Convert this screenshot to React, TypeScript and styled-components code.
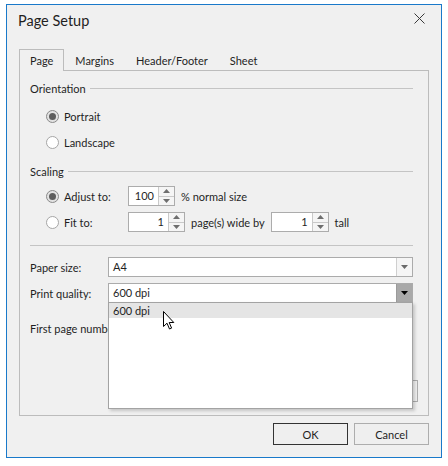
import React from "react";
import styled, { createGlobalStyle } from "styled-components";

const GlobalStyle = createGlobalStyle`
  html, body {
    margin: 0;
    padding: 0;
    background: #ffffff;
  }
  body {
    font-family: Lato, "Liberation Sans", sans-serif;
    font-size: 11px;
    color: #1f1f1f;
  }
`;

const Window = styled.div`
  margin: 4px 0 0 6px;
  width: 436px;
  height: 454px;
  box-sizing: border-box;
  border: 1px solid #1979ca;
  background: #f0f0f0;
  display: flex;
  flex-direction: column;
`;

const TitleBar = styled.div`
  height: 31px;
  display: flex;
  align-items: center;
  justify-content: space-between;
  padding: 0 16px 0 11px;
`;

const Title = styled.div`
  font-size: 14.5px;
  color: #1f1f1f;
`;

const CloseButton = styled.div`
  width: 12px;
  height: 12px;
  display: flex;
  align-items: center;
  justify-content: center;
  margin-top: -4px;
`;

const Body = styled.div`
  flex: 1;
  display: flex;
  flex-direction: column;
  padding: 13px 12px 12px 12px;
`;

const TabStrip = styled.div`
  display: flex;
  height: 21px;
  position: relative;
  z-index: 1;
`;

const Tab = styled.div<{ $active?: boolean }>`
  box-sizing: border-box;
  height: ${(p) => (p.$active ? "22px" : "21px")};
  padding: 0 10px;
  display: flex;
  align-items: center;
  background: #f0f0f0;
  border: 1px solid ${(p) => (p.$active ? "#bcbcbc" : "transparent")};
  border-bottom: none;
`;

const Panel = styled.div`
  flex: 1;
  box-sizing: border-box;
  border: 1px solid #bcbcbc;
  padding: 0 15px 0 10px;
  display: flex;
  flex-direction: column;
`;

const GroupHeader = styled.div<{ $mt: number }>`
  display: flex;
  align-items: center;
  gap: 4px;
  height: 16px;
  margin-top: ${(p) => p.$mt}px;
  &::after {
    content: "";
    flex: 1;
    height: 1px;
    background: #c4c4c4;
  }
`;

const Separator = styled.div<{ $mt: number }>`
  height: 1px;
  background: #c4c4c4;
  margin-top: ${(p) => p.$mt}px;
`;

const OptionRow = styled.div<{ $mt: number }>`
  display: flex;
  align-items: center;
  height: 20px;
  margin-top: ${(p) => p.$mt}px;
  padding-left: 16px;
  gap: 6px;
`;

const RadioLabel = styled.label<{ $w?: number }>`
  display: flex;
  align-items: center;
  gap: 5px;
  ${(p) => (p.$w ? `width: ${p.$w}px;` : "")}
  flex-shrink: 0;
`;

const RadioCircle = styled.span<{ $checked?: boolean }>`
  width: 13px;
  height: 13px;
  box-sizing: border-box;
  border-radius: 50%;
  border: 1px solid ${(p) => (p.$checked ? "#8a8a8a" : "#a6a6a6")};
  background: ${(p) => (p.$checked ? "#e2e2e2" : "#ffffff")};
  display: flex;
  align-items: center;
  justify-content: center;
  &::after {
    content: "";
    width: 7px;
    height: 7px;
    border-radius: 50%;
    background: ${(p) => (p.$checked ? "#5d5d5d" : "transparent")};
  }
`;

const SpinBox = styled.div<{ $w: number }>`
  display: flex;
  width: ${(p) => p.$w}px;
  height: 20px;
  box-sizing: border-box;
  border: 1px solid #acacac;
  background: #ffffff;
  flex-shrink: 0;
`;

const SpinValue = styled.div`
  flex: 1;
  text-align: right;
  padding-right: 4px;
  line-height: 18px;
`;

const SpinButtons = styled.div`
  width: 15px;
  display: flex;
  flex-direction: column;
  border-left: 1px solid #c9c9c9;
  background: #f5f5f5;
`;

const SpinHalf = styled.div<{ $down?: boolean }>`
  flex: 1;
  display: flex;
  align-items: center;
  justify-content: center;
  border-top: ${(p) => (p.$down ? "1px solid #c9c9c9" : "none")};
`;

const FieldRow = styled.div<{ $mt: number }>`
  display: flex;
  align-items: center;
  height: 20px;
  margin-top: ${(p) => p.$mt}px;
`;

const FieldLabel = styled.div`
  width: 78px;
  flex-shrink: 0;
  white-space: nowrap;
`;

const ComboWrap = styled.div`
  flex: 1;
  position: relative;
  height: 20px;
`;

const Combo = styled.div`
  display: flex;
  height: 20px;
  box-sizing: border-box;
  border: 1px solid #ababab;
  background: #ffffff;
`;

const ComboText = styled.div`
  flex: 1;
  padding-left: 4px;
  line-height: 18px;
`;

const ComboButton = styled.div<{ $pressed?: boolean }>`
  width: 15px;
  border-left: 1px solid ${(p) => (p.$pressed ? "#9b9b9b" : "#cfcfcf")};
  background: ${(p) => (p.$pressed ? "#a9a9a9" : "#f5f5f5")};
  display: flex;
  align-items: center;
  justify-content: center;
`;

const Popup = styled.div`
  position: absolute;
  top: 19px;
  left: 0;
  right: 0;
  height: 107px;
  box-sizing: border-box;
  border: 1px solid #a3a3a3;
  background: #ffffff;
  box-shadow: 2px 2px 3px rgba(0, 0, 0, 0.18);
  z-index: 5;
`;

const PopupItem = styled.div<{ $hot?: boolean }>`
  height: 15px;
  line-height: 15px;
  padding-left: 4px;
  background: ${(p) => (p.$hot ? "#e5e5e5" : "transparent")};
`;

const Pointer = styled.svg`
  position: absolute;
  left: 54px;
  top: 8px;
`;

const LabelOnly = styled.div<{ $mt: number }>`
  height: 20px;
  line-height: 20px;
  margin-top: ${(p) => p.$mt}px;
  white-space: nowrap;
`;

const TrailingRow = styled.div<{ $mt: number }>`
  display: flex;
  justify-content: flex-end;
  margin-top: ${(p) => p.$mt}px;
  margin-right: -5px;
`;

const SideButton = styled.div`
  width: 74px;
  height: 22px;
  box-sizing: border-box;
  border: 1px solid #adadad;
  background: #f0f0f0;
`;

const Footer = styled.div`
  display: flex;
  justify-content: flex-end;
  gap: 6px;
  margin-top: 7px;
`;

const DialogButton = styled.button<{ $default?: boolean }>`
  width: 75px;
  height: 22px;
  box-sizing: border-box;
  border: 1px solid ${(p) => (p.$default ? "#333333" : "#adadad")};
  background: #efefef;
  font-family: inherit;
  font-size: 11px;
  color: #1f1f1f;
  padding: 0;
`;

const TriUp = () => (
  <svg width="7" height="4" viewBox="0 0 7 4">
    <path d="M0 4 L3.5 0 L7 4 Z" fill="#6e6e6e" />
  </svg>
);

const TriDown = ({ color = "#6e6e6e" }: { color?: string }) => (
  <svg width="7" height="4" viewBox="0 0 7 4">
    <path d="M0 0 L7 0 L3.5 4 Z" fill={color} />
  </svg>
);

const Spin = ({ value, width }: { value: string; width: number }) => (
  <SpinBox $w={width}>
    <SpinValue>{value}</SpinValue>
    <SpinButtons>
      <SpinHalf>
        <TriUp />
      </SpinHalf>
      <SpinHalf $down>
        <TriDown />
      </SpinHalf>
    </SpinButtons>
  </SpinBox>
);

const Radio = ({
  label,
  checked,
  width,
}: {
  label: string;
  checked?: boolean;
  width?: number;
}) => (
  <RadioLabel $w={width}>
    <RadioCircle $checked={checked} />
    {label}
  </RadioLabel>
);

export default function App() {
  return (
    <>
      <GlobalStyle />
      <Window>
        <TitleBar>
          <Title>Page Setup</Title>
          <CloseButton>
            <svg width="11" height="11" viewBox="0 0 11 11">
              <path d="M0.5 0.5 L10.5 10.5 M10.5 0.5 L0.5 10.5" stroke="#3a3a3a" strokeWidth="1" />
            </svg>
          </CloseButton>
        </TitleBar>
        <Body>
          <TabStrip>
            <Tab $active>Page</Tab>
            <Tab>Margins</Tab>
            <Tab>Header/Footer</Tab>
            <Tab>Sheet</Tab>
          </TabStrip>
          <Panel>
            <GroupHeader $mt={9}>Orientation</GroupHeader>
            <OptionRow $mt={10}>
              <Radio label="Portrait" checked />
            </OptionRow>
            <OptionRow $mt={6}>
              <Radio label="Landscape" />
            </OptionRow>

            <GroupHeader $mt={11}>Scaling</GroupHeader>
            <OptionRow $mt={7}>
              <Radio label="Adjust to:" checked width={76} />
              <Spin value="100" width={47} />
              <span>% normal size</span>
            </OptionRow>
            <OptionRow $mt={6}>
              <Radio label="Fit to:" width={76} />
              <Spin value="1" width={57} />
              <span>page(s) wide by</span>
              <Spin value="1" width={58} />
              <span>tall</span>
            </OptionRow>

            <Separator $mt={13} />

            <FieldRow $mt={11}>
              <FieldLabel>Paper size:</FieldLabel>
              <ComboWrap>
                <Combo>
                  <ComboText>A4</ComboText>
                  <ComboButton>
                    <TriDown color="#6a6a6a" />
                  </ComboButton>
                </Combo>
              </ComboWrap>
            </FieldRow>
            <FieldRow $mt={6}>
              <FieldLabel>Print quality:</FieldLabel>
              <ComboWrap>
                <Combo>
                  <ComboText>600 dpi</ComboText>
                  <ComboButton $pressed>
                    <TriDown color="#000000" />
                  </ComboButton>
                </Combo>
                <Popup>
                  <PopupItem $hot>600 dpi</PopupItem>
                  <Pointer width="12" height="19" viewBox="0 0 12 19">
                    <path
                      d="M0.5 0.5 L0.5 15.5 L4 12.2 L6.5 18 L8.6 17.1 L6.2 11.5 L10.8 11.5 Z"
                      fill="#ffffff"
                      stroke="#000000"
                      strokeWidth="1"
                      strokeLinejoin="miter"
                    />
                  </Pointer>
                </Popup>
              </ComboWrap>
            </FieldRow>
            <LabelOnly $mt={16}>First page number:</LabelOnly>
            <TrailingRow $mt={41}>
              <SideButton />
            </TrailingRow>
          </Panel>
          <Footer>
            <DialogButton $default>OK</DialogButton>
            <DialogButton>Cancel</DialogButton>
          </Footer>
        </Body>
      </Window>
    </>
  );
}
